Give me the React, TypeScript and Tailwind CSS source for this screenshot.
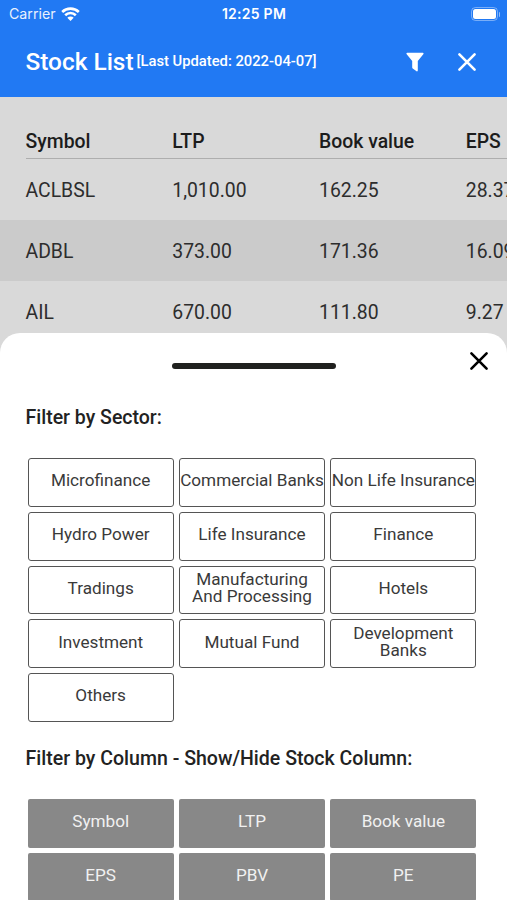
const columns = ['Symbol', 'LTP', 'Book value', 'EPS']

const stocks = [
  ['ACLBSL', '1,010.00', '162.25', '28.37'],
  ['ADBL', '373.00', '171.36', '16.09'],
  ['AIL', '670.00', '111.80', '9.27'],
]

const sectors = [
  'Microfinance',
  'Commercial Banks',
  'Non Life Insurance',
  'Hydro Power',
  'Life Insurance',
  'Finance',
  'Tradings',
  'Manufacturing And Processing',
  'Hotels',
  'Investment',
  'Mutual Fund',
  'Development Banks',
  'Others',
]

const columnFilters = ['Symbol', 'LTP', 'Book value', 'EPS', 'PBV', 'PE']

function CloseIcon() {
  return (
    <svg width="20" height="20" viewBox="0 0 20 20" fill="none" stroke="currentColor" strokeWidth="2.6" strokeLinecap="round">
      <path d="M2.4 2.4 17.6 17.6M17.6 2.4 2.4 17.6" />
    </svg>
  )
}

function StatusBar() {
  return (
    <div className="grid h-7 grid-cols-3 items-center pr-[7px] pl-[9px] leading-none">
      <div className="flex items-center gap-[5px]">
        <span className="text-[14.2px] font-['Inter'] opacity-90">Carrier</span>
        <svg width="19" height="15" viewBox="0 0 19 15" fill="none" stroke="currentColor" strokeWidth="2.6">
          <path d="M1.2 5a11.9 11.9 0 0 1 16.6 0M4.2 8.2a7.6 7.6 0 0 1 10.6 0" />
          <path d="M9.5 14 6.3 10.8a4.6 4.6 0 0 1 6.4 0Z" fill="currentColor" stroke="none" />
        </svg>
      </div>
      <span className="pr-px text-center font-['Inter'] text-[14px] font-semibold tracking-[0.25px]">12:25 PM</span>
      <div className="flex items-center justify-end gap-px">
        <div className="h-[14px] w-[27px] rounded-[4.5px] border-[1.5px] border-white/40 p-px">
          <div className="h-full rounded-[2.5px] bg-white" />
        </div>
        <div className="h-[5px] w-[1.5px] rounded-r-full bg-white/50" />
      </div>
    </div>
  )
}

function Header() {
  return (
    <header className="h-[97px] bg-[#2179f3] text-white">
      <StatusBar />
      <div className="flex h-[68px] items-center pr-[30px] pl-[25.5px]">
        <h1 className="w-[111px] pt-px text-[24.4px] font-medium whitespace-nowrap">Stock List</h1>
        <span className="pb-[2px] text-[14.75px] font-medium">[Last Updated: 2022-04-07]</span>
        <div className="ml-auto flex items-center gap-[33px]">
          <svg width="18" height="20" viewBox="0 0 18 20" fill="currentColor">
            <path d="M1.2.8h15.6c.8 0 1 .8.5 1.4L11.8 9v9.6c0 .7-.7 1-1.2.6L6.7 16.4c-.3-.2-.5-.5-.5-.9V9L.7 2.2C.2 1.6.4.8 1.2.8Z" />
          </svg>
          <CloseIcon />
        </div>
      </div>
    </header>
  )
}

function StockTable() {
  return (
    <div className="h-[236px] overflow-hidden text-[19.4px] text-[#2d2d2d]">
      <div className="ml-[25.5px] grid h-[62px] w-[587px] grid-cols-4 items-end border-b border-[#aeaeae] pb-[2px] font-medium text-[#1c1c1c]">
        {columns.map((column) => (
          <span key={column}>{column}</span>
        ))}
      </div>
      {stocks.map((row) => (
        <div key={row[0]} className="h-[61px] w-[612.5px] pl-[25.5px] odd:bg-[#cbcbcb] even:bg-[#d9d9d9]">
          <div className="grid h-full grid-cols-4 items-center pt-[3px]">
            {row.map((value) => (
              <span key={value}>{value}</span>
            ))}
          </div>
        </div>
      ))}
    </div>
  )
}

function FilterSheet() {
  return (
    <section className="h-[567px] overflow-hidden rounded-t-[20px] bg-white">
      <div className="grid h-[56px] grid-cols-[1fr_164px_1fr] items-center pr-[18px] pl-[19px]">
        <div />
        <div className="mt-[10px] h-[6px] rounded-full bg-[#20211f]" />
        <div className="flex justify-end text-black">
          <CloseIcon />
        </div>
      </div>
      <h2 className="mt-[14px] pl-[25.5px] text-[19.5px] leading-[30px] font-medium text-[#222]">Filter by Sector:</h2>
      <div className="mt-[25px] ml-[27.5px] grid w-[449px] auto-rows-[48.75px] grid-cols-3 gap-[5px]">
        {sectors.map((sector) => (
          <button
            key={sector}
            className="rounded-[3px] border border-[#555] pb-[3px] text-[17.15px] leading-[17px] text-[#3a3a3a]"
          >
            {sector}
          </button>
        ))}
      </div>
      <h2 className="mt-[22px] pl-[25.5px] text-[19.55px] leading-[30px] font-medium text-[#222]">
        Filter by Column - Show/Hide Stock Column:
      </h2>
      <div className="mt-[25px] ml-[27.5px] grid w-[449px] auto-rows-[48.75px] grid-cols-3 gap-[5px]">
        {columnFilters.map((column) => (
          <button key={column} className="rounded-[2px] bg-[#888] pb-[3px] text-[17.15px] leading-[17px] text-[#f1f1f1]">
            {column}
          </button>
        ))}
      </div>
    </section>
  )
}

export default function App() {
  return (
    <div className="h-[900px] w-[507px] overflow-hidden bg-[#d9d9d9] font-['Roboto',sans-serif]">
      <Header />
      <StockTable />
      <FilterSheet />
    </div>
  )
}
